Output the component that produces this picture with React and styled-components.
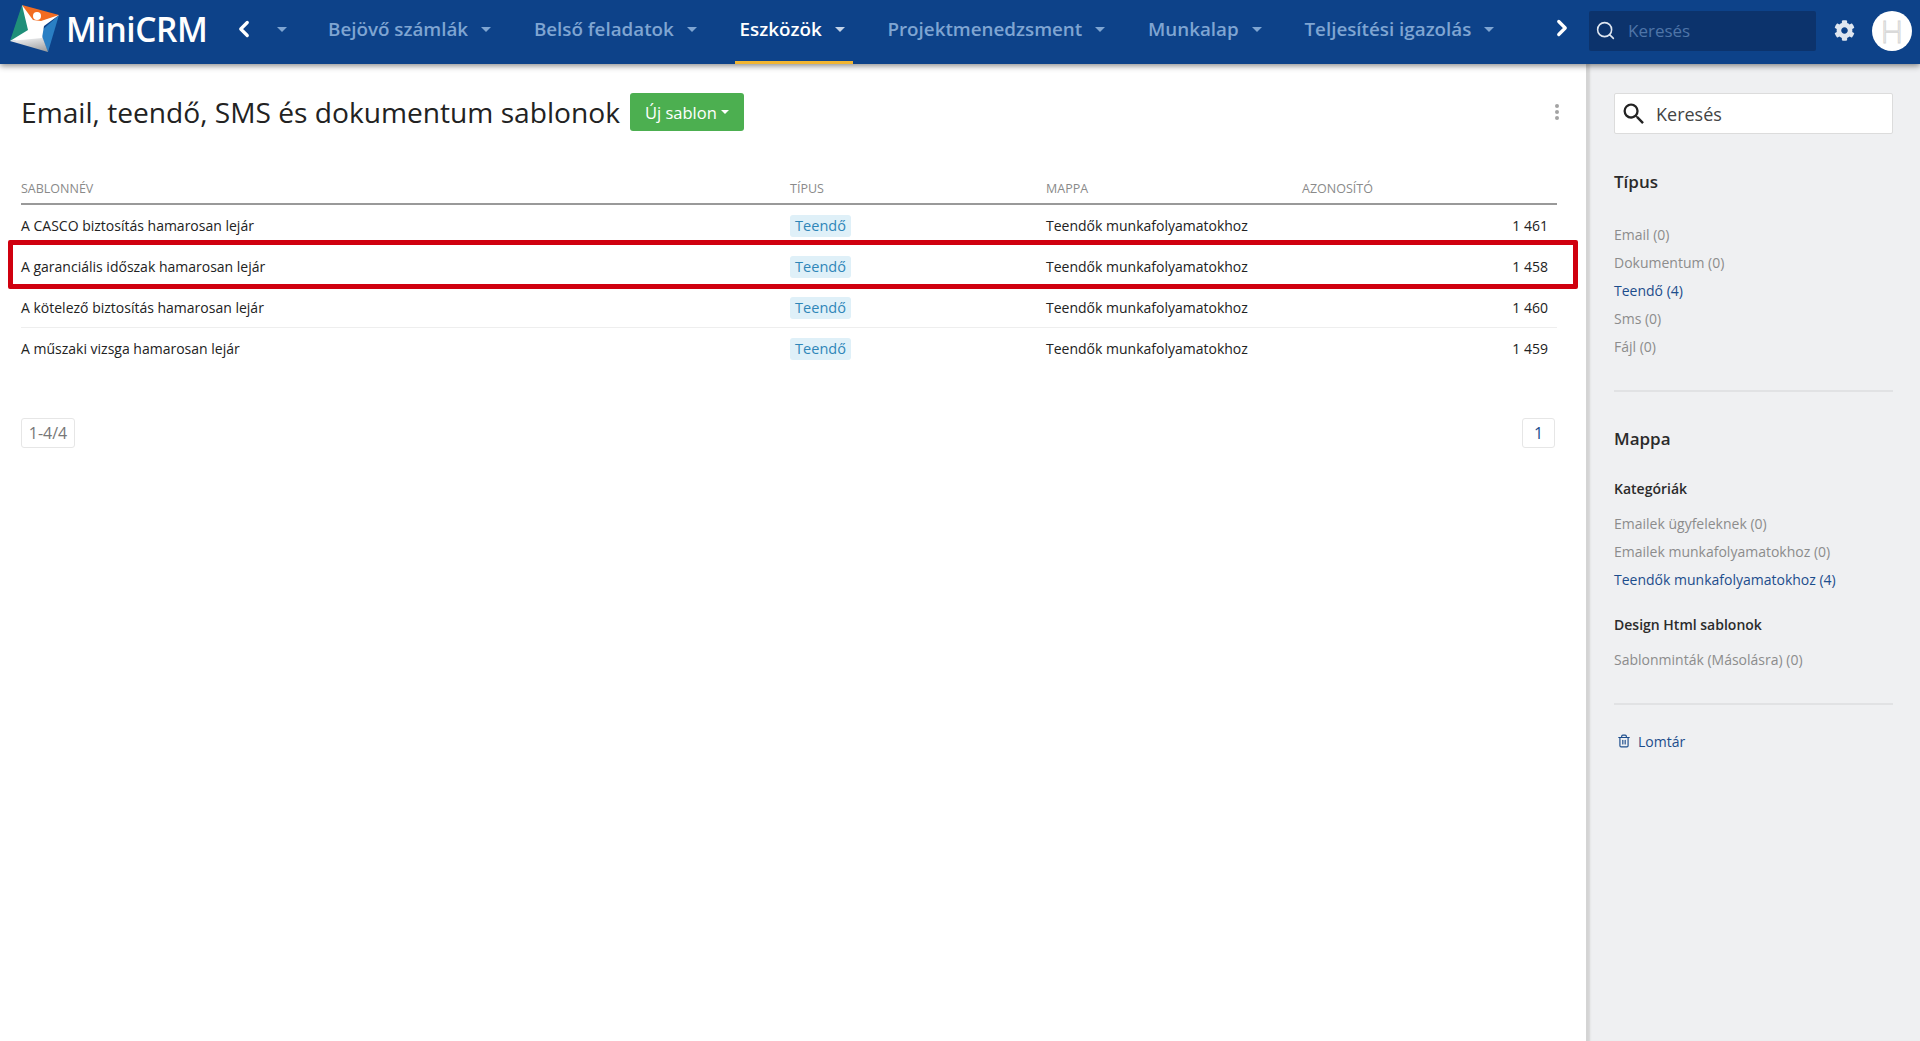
import React from 'react';
import styled, { createGlobalStyle } from 'styled-components';
import { ChevronLeft, ChevronRight, Search, Trash2 } from 'lucide-react';
import { FaCog } from 'react-icons/fa';
import { MdSearch } from 'react-icons/md';

const GlobalStyle = createGlobalStyle`
  html, body {
    margin: 0;
    padding: 0;
    height: 100%;
    background: #fff;
    font-family: "Open Sans", "Noto Sans", sans-serif;
    color: #222;
  }
  * { box-sizing: border-box; }
`;

const Page = styled.div`
  display: flex;
  flex-direction: column;
  width: 100%;
  height: 100vh;
  overflow: hidden;
`;

const Header = styled.header`
  position: relative;
  z-index: 2;
  display: flex;
  align-items: stretch;
  height: 64px;
  flex-shrink: 0;
  background: #0d4289;
  box-shadow: 0 2px 6px rgba(0, 0, 0, 0.45);
`;

const Brand = styled.div`
  display: flex;
  align-items: center;
  width: 228px;
  padding: 0 0 6px 10px;
  flex-shrink: 0;
`;

const BrandName = styled.span`
  margin-left: 4px;
  font-family: "Open Sans", sans-serif;
  font-size: 33.5px;
  font-weight: 600;
  letter-spacing: -0.4px;
  color: #fff;
`;

const ArrowButton = styled.div`
  display: flex;
  align-items: center;
  justify-content: center;
  width: ${(p) => p.$width || 32}px;
  padding-bottom: 6px;
  color: #fff;
`;

const Caret = styled.span`
  display: inline-block;
  width: 0;
  height: 0;
  border-left: ${(p) => p.$size || 5}px solid transparent;
  border-right: ${(p) => p.$size || 5}px solid transparent;
  border-top: ${(p) => p.$size || 5}px solid ${(p) => p.$color || '#7fa5d2'};
`;

const BackCaret = styled.div`
  display: flex;
  align-items: center;
  justify-content: center;
  width: 30px;
  margin: 0 26px 0 7px;
  padding-bottom: 6px;
`;

const Nav = styled.nav`
  display: flex;
  gap: 29.8px;
`;

const NavItem = styled.div`
  display: flex;
  align-items: center;
  gap: 13px;
  height: 64px;
  padding: 0 8px 3px 5px;
  font-size: 18.8px;
  font-weight: 600;
  white-space: nowrap;
  color: ${(p) => (p.$active ? '#fff' : '#7fa5d2')};
  border-bottom: 3px solid ${(p) => (p.$active ? '#f2b632' : 'transparent')};
`;

const HeaderRight = styled.div`
  display: flex;
  align-items: center;
  margin-left: auto;
  padding: 0 8px 3px 0;
`;

const HeaderSearch = styled.div`
  display: flex;
  align-items: center;
  width: 227px;
  height: 40px;
  margin-left: 14px;
  padding-left: 6px;
  border-radius: 2px;
  background: #0c336c;
  color: #dfe6f0;
`;

const HeaderSearchText = styled.span`
  margin-left: 12px;
  font-size: 17px;
  color: #4f75a8;
`;

const Gear = styled.div`
  display: flex;
  align-items: center;
  margin: 0 17px 0 18px;
  color: #dfe6f0;
`;

const Avatar = styled.div`
  display: flex;
  align-items: center;
  justify-content: center;
  width: 40px;
  height: 40px;
  border-radius: 50%;
  background: #fff;
  font-size: 31px;
  font-weight: 300;
  color: #fff;
  -webkit-text-stroke: 1px #d4d4d4;
`;

const Body = styled.div`
  display: flex;
  flex: 1;
  min-height: 0;
`;

const Content = styled.main`
  flex: 1;
  padding: 29px 29px 0 21px;
`;

const TitleRow = styled.div`
  display: flex;
  align-items: center;
  height: 38px;
`;

const Title = styled.h1`
  margin: 0;
  font-size: 28.15px;
  font-weight: 400;
  color: #222;
  white-space: nowrap;
`;

const NewButton = styled.button`
  display: flex;
  align-items: center;
  gap: 4px;
  height: 38px;
  margin-left: 10px;
  padding: 0 15px;
  border: none;
  border-radius: 3px;
  background: #4caf50;
  color: #fff;
  font-family: inherit;
  font-size: 16.5px;
`;

const Kebab = styled.div`
  display: flex;
  flex-direction: column;
  gap: 2px;
  margin-left: auto;
  margin-right: -2px;
`;

const KebabDot = styled.span`
  width: 4px;
  height: 4px;
  border-radius: 50%;
  background: #a3a3a3;
`;

const columns = '769px 256px 256px 255px';

const TableHead = styled.div`
  display: grid;
  grid-template-columns: ${columns};
  align-items: center;
  height: 30px;
  margin-top: 44px;
  padding-bottom: 2px;
  border-bottom: 2px solid #999;
  font-size: 12.5px;
  color: #8a8a8a;
`;

const Row = styled.div`
  position: relative;
  display: grid;
  grid-template-columns: ${columns};
  align-items: center;
  height: 41px;
  font-size: 14px;
  color: #222;
  border-bottom: 1px solid ${(p) => (p.$line ? '#eeeeee' : 'transparent')};
`;

const Highlight = styled.div`
  position: absolute;
  top: -6px;
  bottom: -3px;
  left: -13px;
  right: -21px;
  border: 5px solid #d0000f;
  border-radius: 2px;
  pointer-events: none;
`;

const Badge = styled.span`
  justify-self: start;
  width: 61px;
  margin-top: 1px;
  padding: 2px 0;
  border-radius: 3px;
  background: #dff0f8;
  color: #2f86b8;
  font-size: 14.5px;
  line-height: 18px;
  text-align: center;
`;

const Num = styled.span`
  justify-self: end;
  padding-right: 9px;
`;

const Pager = styled.div`
  display: flex;
  justify-content: space-between;
  width: 1534px;
  margin-top: 49px;
`;

const PagerBox = styled.div`
  display: flex;
  align-items: center;
  justify-content: center;
  width: ${(p) => p.$width}px;
  height: 30px;
  border: 1px solid #e6e6e6;
  border-radius: 3px;
  font-size: 16px;
  color: ${(p) => p.$color};
`;

const Sidebar = styled.aside`
  width: 334px;
  flex-shrink: 0;
  padding: 29px 27px 0 28px;
  background: #eff0f2;
  box-shadow: inset 5px 0 2px -1px #d4d4d4;
`;

const SideSearch = styled.div`
  display: flex;
  align-items: center;
  height: 41px;
  padding-left: 5px;
  background: #fff;
  border: 1px solid #dcdcdc;
  border-radius: 2px;
  color: #222;
`;

const SideSearchText = styled.span`
  margin-left: 8px;
  font-size: 18px;
  color: #444;
`;

const SectionTitle = styled.h3`
  margin: ${(p) => p.$top}px 0 27px;
  font-size: 17px;
  font-weight: 600;
  line-height: 24px;
  color: #2b2b2b;
`;

const GroupTitle = styled.h4`
  margin: ${(p) => p.$top || 0}px 0 10px;
  font-size: 14px;
  font-weight: 600;
  line-height: 22px;
  color: #2b2b2b;
`;

const FilterItem = styled.div`
  font-size: 14px;
  line-height: 28px;
  white-space: nowrap;
  color: ${(p) => (p.$active ? '#1c4d8c' : '#8c8c8c')};
`;

const Divider = styled.div`
  height: 2px;
  margin-top: ${(p) => p.$top}px;
  background: #e1e2e4;
`;

const TrashLink = styled.div`
  display: flex;
  align-items: center;
  gap: 7px;
  height: 28px;
  margin-top: 22px;
  padding-left: 3px;
  font-size: 14px;
  color: #1c4d8c;
`;

const navItems = [
  { label: 'Bejövő számlák' },
  { label: 'Belső feladatok' },
  { label: 'Eszközök', active: true },
  { label: 'Projektmenedzsment' },
  { label: 'Munkalap' },
  { label: 'Teljesítési igazolás' },
];

const rows = [
  { name: 'A CASCO biztosítás hamarosan lejár', id: '1 461' },
  { name: 'A garanciális időszak hamarosan lejár', id: '1 458', marked: true },
  { name: 'A kötelező biztosítás hamarosan lejár', id: '1 460', line: true },
  { name: 'A műszaki vizsga hamarosan lejár', id: '1 459' },
];

const Logo = () => (
  <svg width="52" height="52" viewBox="10 1 52 52">
    <defs>
      <linearGradient id="logoGrey" x1="0.4" y1="0.2" x2="0.7" y2="1">
        <stop offset="0" stopColor="#e6e7e8" />
        <stop offset="1" stopColor="#9ea0a2" />
      </linearGradient>
    </defs>
    <polygon points="22,3 59,13 36,28" fill="#f26c21" />
    <polygon points="59,13 48,50 40,30" fill="#2a7fc4" />
    <polygon points="22,3 10,39 32,28" fill="#1f8f79" />
    <polygon points="10,39 48,50 42,34" fill="url(#logoGrey)" />
    <polygon points="22,3 33,18 41,19 59,13 44,24 42,36 10,39 28,28" fill="#fff" />
    <circle cx="37" cy="14" r="4" fill="#fff" />
  </svg>
);

const App = () => {
  return (
    <Page>
      <GlobalStyle />
      <Header>
        <Brand>
          <Logo />
          <BrandName>MiniCRM</BrandName>
        </Brand>
        <ArrowButton>
          <ChevronLeft size={26} strokeWidth={3} />
        </ArrowButton>
        <BackCaret>
          <Caret />
        </BackCaret>
        <Nav>
          {navItems.map((item) => (
            <NavItem key={item.label} $active={item.active}>
              {item.label}
              <Caret $color={item.active ? '#c3d3e8' : '#7fa5d2'} />
            </NavItem>
          ))}
        </Nav>
        <HeaderRight>
          <ArrowButton $width={26}>
            <ChevronRight size={26} strokeWidth={3} />
          </ArrowButton>
          <HeaderSearch>
            <Search size={21} strokeWidth={1.8} />
            <HeaderSearchText>Keresés</HeaderSearchText>
          </HeaderSearch>
          <Gear>
            <FaCog size={21} />
          </Gear>
          <Avatar>H</Avatar>
        </HeaderRight>
      </Header>
      <Body>
        <Content>
          <TitleRow>
            <Title>Email, teendő, SMS és dokumentum sablonok</Title>
            <NewButton>
              Új sablon <Caret $size={4} $color="#fff" />
            </NewButton>
            <Kebab>
              <KebabDot />
              <KebabDot />
              <KebabDot />
            </Kebab>
          </TitleRow>
          <TableHead>
            <span>SABLONNÉV</span>
            <span>TÍPUS</span>
            <span>MAPPA</span>
            <span>AZONOSÍTÓ</span>
          </TableHead>
          {rows.map((row) => (
            <Row key={row.id} $line={row.line}>
              <span>{row.name}</span>
              <Badge>Teendő</Badge>
              <span>Teendők munkafolyamatokhoz</span>
              <Num>{row.id}</Num>
              {row.marked && <Highlight />}
            </Row>
          ))}
          <Pager>
            <PagerBox $width={54} $color="#777">1-4/4</PagerBox>
            <PagerBox $width={33} $color="#1c4d8c">1</PagerBox>
          </Pager>
        </Content>
        <Sidebar>
          <SideSearch>
            <MdSearch size={28} />
            <SideSearchText>Keresés</SideSearchText>
          </SideSearch>
          <SectionTitle $top={36}>Típus</SectionTitle>
          <FilterItem>Email (0)</FilterItem>
          <FilterItem>Dokumentum (0)</FilterItem>
          <FilterItem $active>Teendő (4)</FilterItem>
          <FilterItem>Sms (0)</FilterItem>
          <FilterItem>Fájl (0)</FilterItem>
          <Divider $top={29} />
          <SectionTitle $top={35}>Mappa</SectionTitle>
          <GroupTitle>Kategóriák</GroupTitle>
          <FilterItem>Emailek ügyfeleknek (0)</FilterItem>
          <FilterItem>Emailek munkafolyamatokhoz (0)</FilterItem>
          <FilterItem $active>Teendők munkafolyamatokhoz (4)</FilterItem>
          <GroupTitle $top={20}>Design Html sablonok</GroupTitle>
          <FilterItem>Sablonminták (Másolásra) (0)</FilterItem>
          <Divider $top={29} />
          <TrashLink>
            <Trash2 size={14} />
            Lomtár
          </TrashLink>
        </Sidebar>
      </Body>
    </Page>
  );
};

export default App;
